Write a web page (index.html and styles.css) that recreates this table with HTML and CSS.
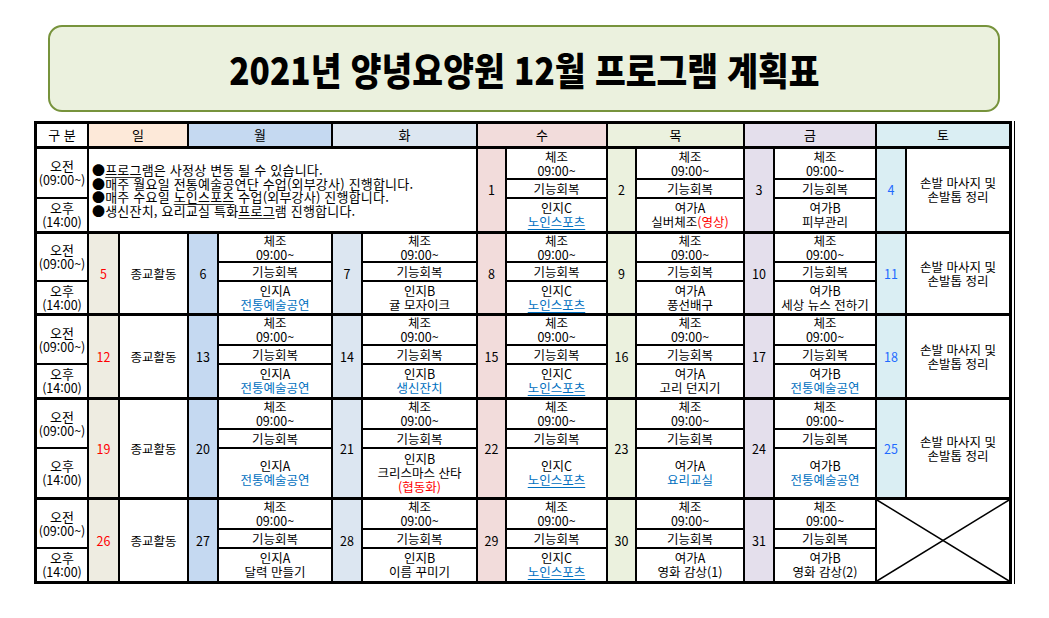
FILE: index.html
```html
<!DOCTYPE html>
<html lang="ko">
<head>
<meta charset="utf-8">
<title>2021년 양녕요양원 12월 프로그램 계획표</title>
<link rel="stylesheet" href="styles.css">
</head>
<body>
<div class="page">
  <div class="title"><h1>2021년 양녕요양원 12월 프로그램 계획표</h1></div>

  <div class="sheet">
    <div class="grid head">
      <div class="cell">구 분</div>
      <div class="cell c2 sunh">일</div>
      <div class="cell c2 mon">월</div>
      <div class="cell c2 tue">화</div>
      <div class="cell c2 wed">수</div>
      <div class="cell c2 thu">목</div>
      <div class="cell c2 fri">금</div>
      <div class="cell c2 sat">토</div>
    </div>

    <!-- week 1 -->
    <div class="grid w1">
      <div class="cell r2 gb"><span>오전</span><span>(09:00~)</span></div>
      <div class="cell c6 r3 note">
        <p>●<u>프로그</u>램은 사정상 변동 될 수 있습니다.</p>
        <p>●매주 월요일 전통예술공연단 수업(외부강사) 진행합니다.</p>
        <p>●매주 수요일 <u>노인스포츠</u> 수업(외부강사) 진행합니다.</p>
        <p>●생신잔치, 요리교실 특화<u>프로그</u>램 진행합니다.</p>
      </div>
      <div class="cell r3 wed">1</div>
      <div class="cell"><span>체조</span><span>09:00~</span></div>
      <div class="cell r3 thu">2</div>
      <div class="cell"><span>체조</span><span>09:00~</span></div>
      <div class="cell r3 fri">3</div>
      <div class="cell"><span>체조</span><span>09:00~</span></div>
      <div class="cell r3 sat blue">4</div>
      <div class="cell r3"><span>손발 마사지 및</span><span>손발톱 정리</span></div>

      <div class="cell">기능회복</div>
      <div class="cell">기능회복</div>
      <div class="cell">기능회복</div>

      <div class="cell gb"><span>오후</span><span>(14:00)</span></div>
      <div class="cell"><span>인지C</span><span class="link u">노인스포츠</span></div>
      <div class="cell"><span>여가A</span><span>실버체조<em class="red">(영상)</em></span></div>
      <div class="cell"><span>여가B</span><span>피부관리</span></div>
    </div>

    <!-- week 2 -->
    <div class="grid w2">
      <div class="cell r2 gb"><span>오전</span><span>(09:00~)</span></div>
      <div class="cell r3 sun red">5</div>
      <div class="cell r3">종교활동</div>
      <div class="cell r3 mon">6</div>
      <div class="cell"><span>체조</span><span>09:00~</span></div>
      <div class="cell r3 tue">7</div>
      <div class="cell"><span>체조</span><span>09:00~</span></div>
      <div class="cell r3 wed">8</div>
      <div class="cell"><span>체조</span><span>09:00~</span></div>
      <div class="cell r3 thu">9</div>
      <div class="cell"><span>체조</span><span>09:00~</span></div>
      <div class="cell r3 fri">10</div>
      <div class="cell"><span>체조</span><span>09:00~</span></div>
      <div class="cell r3 sat blue">11</div>
      <div class="cell r3"><span>손발 마사지 및</span><span>손발톱 정리</span></div>

      <div class="cell">기능회복</div>
      <div class="cell">기능회복</div>
      <div class="cell">기능회복</div>
      <div class="cell">기능회복</div>
      <div class="cell">기능회복</div>

      <div class="cell gb"><span>오후</span><span>(14:00)</span></div>
      <div class="cell"><span>인지A</span><span class="link">전통예술공연</span></div>
      <div class="cell"><span>인지B</span><span>귤 모자이크</span></div>
      <div class="cell"><span>인지C</span><span class="link u">노인스포츠</span></div>
      <div class="cell"><span>여가A</span><span>풍선배구</span></div>
      <div class="cell"><span>여가B</span><span>세상 뉴스 전하기</span></div>
    </div>

    <!-- week 3 -->
    <div class="grid w3">
      <div class="cell r2 gb"><span>오전</span><span>(09:00~)</span></div>
      <div class="cell r3 sun red">12</div>
      <div class="cell r3">종교활동</div>
      <div class="cell r3 mon">13</div>
      <div class="cell"><span>체조</span><span>09:00~</span></div>
      <div class="cell r3 tue">14</div>
      <div class="cell"><span>체조</span><span>09:00~</span></div>
      <div class="cell r3 wed">15</div>
      <div class="cell"><span>체조</span><span>09:00~</span></div>
      <div class="cell r3 thu">16</div>
      <div class="cell"><span>체조</span><span>09:00~</span></div>
      <div class="cell r3 fri">17</div>
      <div class="cell"><span>체조</span><span>09:00~</span></div>
      <div class="cell r3 sat blue">18</div>
      <div class="cell r3"><span>손발 마사지 및</span><span>손발톱 정리</span></div>

      <div class="cell">기능회복</div>
      <div class="cell">기능회복</div>
      <div class="cell">기능회복</div>
      <div class="cell">기능회복</div>
      <div class="cell">기능회복</div>

      <div class="cell gb"><span>오후</span><span>(14:00)</span></div>
      <div class="cell"><span>인지A</span><span class="link">전통예술공연</span></div>
      <div class="cell"><span>인지B</span><span class="link">생신잔치</span></div>
      <div class="cell"><span>인지C</span><span class="link u">노인스포츠</span></div>
      <div class="cell"><span>여가A</span><span>고리 던지기</span></div>
      <div class="cell"><span>여가B</span><span class="link">전통예술공연</span></div>
    </div>

    <!-- week 4 -->
    <div class="grid w4">
      <div class="cell r2 gb"><span>오전</span><span>(09:00~)</span></div>
      <div class="cell r3 sun red">19</div>
      <div class="cell r3">종교활동</div>
      <div class="cell r3 mon">20</div>
      <div class="cell"><span>체조</span><span>09:00~</span></div>
      <div class="cell r3 tue">21</div>
      <div class="cell"><span>체조</span><span>09:00~</span></div>
      <div class="cell r3 wed">22</div>
      <div class="cell"><span>체조</span><span>09:00~</span></div>
      <div class="cell r3 thu">23</div>
      <div class="cell"><span>체조</span><span>09:00~</span></div>
      <div class="cell r3 fri">24</div>
      <div class="cell"><span>체조</span><span>09:00~</span></div>
      <div class="cell r3 sat blue">25</div>
      <div class="cell r3"><span>손발 마사지 및</span><span>손발톱 정리</span></div>

      <div class="cell">기능회복</div>
      <div class="cell">기능회복</div>
      <div class="cell">기능회복</div>
      <div class="cell">기능회복</div>
      <div class="cell">기능회복</div>

      <div class="cell gb"><span>오후</span><span>(14:00)</span></div>
      <div class="cell"><span>인지A</span><span class="link">전통예술공연</span></div>
      <div class="cell"><span>인지B</span><span>크리스마스 산타</span><span class="red">(협동화)</span></div>
      <div class="cell"><span>인지C</span><span class="link u">노인스포츠</span></div>
      <div class="cell"><span>여가A</span><span class="link">요리교실</span></div>
      <div class="cell"><span>여가B</span><span class="link">전통예술공연</span></div>
    </div>

    <!-- week 5 -->
    <div class="grid w5">
      <div class="cell r2 gb"><span>오전</span><span>(09:00~)</span></div>
      <div class="cell r3 sun red">26</div>
      <div class="cell r3">종교활동</div>
      <div class="cell r3 mon">27</div>
      <div class="cell"><span>체조</span><span>09:00~</span></div>
      <div class="cell r3 tue">28</div>
      <div class="cell"><span>체조</span><span>09:00~</span></div>
      <div class="cell r3 wed">29</div>
      <div class="cell"><span>체조</span><span>09:00~</span></div>
      <div class="cell r3 thu">30</div>
      <div class="cell"><span>체조</span><span>09:00~</span></div>
      <div class="cell r3 fri">31</div>
      <div class="cell"><span>체조</span><span>09:00~</span></div>
      <div class="cell c2 r3 cross">
        <svg viewBox="0 0 100 100" preserveAspectRatio="none" aria-hidden="true">
          <line x1="0" y1="0" x2="100" y2="100"/>
          <line x1="100" y1="0" x2="0" y2="100"/>
        </svg>
      </div>

      <div class="cell">기능회복</div>
      <div class="cell">기능회복</div>
      <div class="cell">기능회복</div>
      <div class="cell">기능회복</div>
      <div class="cell">기능회복</div>

      <div class="cell gb"><span>오후</span><span>(14:00)</span></div>
      <div class="cell"><span>인지A</span><span>달력 만들기</span></div>
      <div class="cell"><span>인지B</span><span>이름 꾸미기</span></div>
      <div class="cell"><span>인지C</span><span class="link u">노인스포츠</span></div>
      <div class="cell"><span>여가A</span><span>영화 감상(1)</span></div>
      <div class="cell"><span>여가B</span><span>영화 감상(2)</span></div>
    </div>
  </div>
</div>
</body>
</html>
```

FILE: styles.css
```css
html, body {
  margin: 0;
  padding: 0;
  background: #ffffff;
}

body {
  font-family: "Noto Sans CJK KR", "Noto Sans", sans-serif;
  color: #000;
}

.page {
  display: flex;
  flex-direction: column;
  align-items: flex-start;
  gap: 9px;
  padding: 25px 0 0 34px;
}

.title {
  box-sizing: border-box;
  margin-left: 14px;
  width: 952px;
  height: 87px;
  background: #ebf1de;
  border: 2px solid #77933c;
  border-radius: 14px;
  display: flex;
  align-items: center;
  justify-content: center;
}

.title h1 {
  margin: 0;
  font-size: 38px;
  font-weight: 900;
  line-height: 1;
  letter-spacing: 0;
  white-space: nowrap;
  transform: scaleX(0.88);
  padding-top: 1px;
}

.sheet {
  background: #000;
  padding: 3px;
  display: flex;
  flex-direction: column;
  gap: 3px;
  box-shadow: 2px 0 0 0 #fff, 3px 0 0 0 #000;
}

.grid {
  display: grid;
  grid-template-columns: 50px 29px 67px 28px 112px 28px 113px 27px 99px 27px 106px 28px 100px 28px 102px;
  gap: 2px;
}

.head { grid-template-rows: 22px; }
.w1 { grid-template-rows: 29px 17px 32px; }
.w2 { grid-template-rows: 27px 17px 31px; }
.w3 { grid-template-rows: 28px 17px 32px; }
.w4 { grid-template-rows: 28px 17px 48px; }
.w5 { grid-template-rows: 28px 17px 32px; }

.cell {
  background: #fff;
  display: flex;
  flex-direction: column;
  align-items: center;
  justify-content: center;
  text-align: center;
  font-size: 12.5px;
  line-height: 14px;
  white-space: nowrap;
}

.head .cell {
  font-size: 13px;
}

.c2 { grid-column: span 2; }
.c6 { grid-column: span 6; }
.r2 { grid-row: span 2; }
.r3 { grid-row: span 3; }

.gb span:first-child {
  font-size: 13px;
}

.sunh { background: #fde9d9; }
.sun { background: #eeece1; }
.mon { background: #c5d9f1; }
.tue { background: #dce6f1; }
.wed { background: #f2dcdb; }
.thu { background: #ebf1de; }
.fri { background: #e4dfec; }
.sat { background: #daeef3; }

.red { color: #ff0000; }
.blue { color: #1f6bff; }
.link { color: #0070c0; }
.u { text-decoration: underline; text-underline-offset: 2px; }

em { font-style: normal; }

.note {
  align-items: flex-start;
  text-align: left;
  padding: 0 0 0 3px;
  font-size: 13px;
  letter-spacing: 0.2px;
  line-height: 13.5px;
}

.note p {
  margin: 0;
}

.note u {
  text-decoration-color: #333;
  text-underline-offset: 2px;
}

.cross {
  position: relative;
  padding: 0;
}

.cross svg {
  position: absolute;
  inset: 0;
  width: 100%;
  height: 100%;
}

.cross line {
  stroke: #000;
  stroke-width: 1.5;
  vector-effect: non-scaling-stroke;
}
```
